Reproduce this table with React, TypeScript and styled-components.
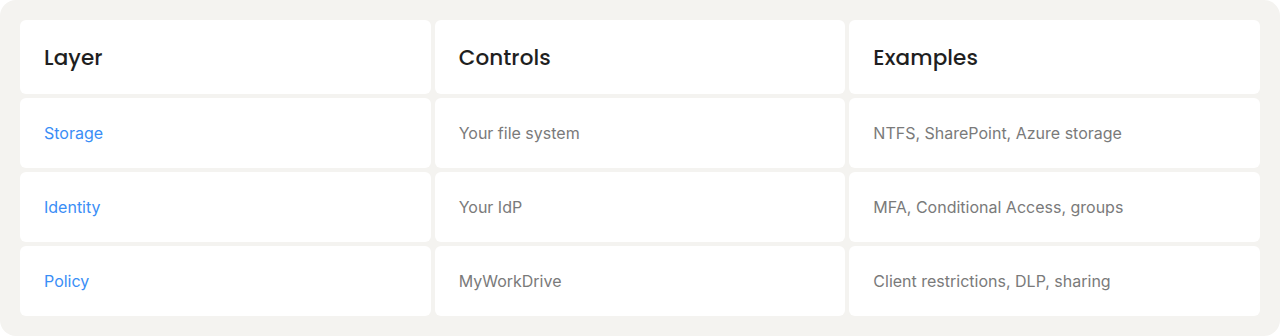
import React from "react";
import styled, { createGlobalStyle } from "styled-components";

const Global = createGlobalStyle`
  html, body { margin: 0; padding: 0; background: #ffffff; }
  * { box-sizing: border-box; }
`;

const Panel = styled.div`
  width: 1280px;
  height: 336px;
  background: #f4f3f0;
  border-radius: 16px;
  padding: 20px;
  display: grid;
  grid-template-columns: repeat(3, 1fr);
  grid-template-rows: 74px repeat(3, 70px);
  gap: 4px;
`;

const Cell = styled.div`
  background: #ffffff;
  border-radius: 6px;
  display: flex;
  align-items: center;
  padding-left: 24px;
`;

const HeadText = styled.span`
  font-family: "Poppins", "Inter", "Open Sans", sans-serif;
  font-weight: 500;
  font-size: 21.5px;
  color: #1f1f1f;
  letter-spacing: 0.1px;
`;

const BodyText = styled.span<{ $accent?: boolean }>`
  font-family: "Inter", "Liberation Sans", sans-serif;
  font-size: 16px;
  font-weight: 400;
  color: ${(p) => (p.$accent ? "#3a8ef6" : "#7a7a7a")};
`;

const rows = [
  ["Storage", "Your file system", "NTFS, SharePoint, Azure storage"],
  ["Identity", "Your IdP", "MFA, Conditional Access, groups"],
  ["Policy", "MyWorkDrive", "Client restrictions, DLP, sharing"],
];

export default function App() {
  return (
    <>
      <Global />
      <Panel>
        {["Layer", "Controls", "Examples"].map((h) => (
          <Cell key={h}>
            <HeadText>{h}</HeadText>
          </Cell>
        ))}
        {rows.map((r) =>
          r.map((c, i) => (
            <Cell key={r[0] + i}>
              <BodyText $accent={i === 0}>{c}</BodyText>
            </Cell>
          ))
        )}
      </Panel>
    </>
  );
}
